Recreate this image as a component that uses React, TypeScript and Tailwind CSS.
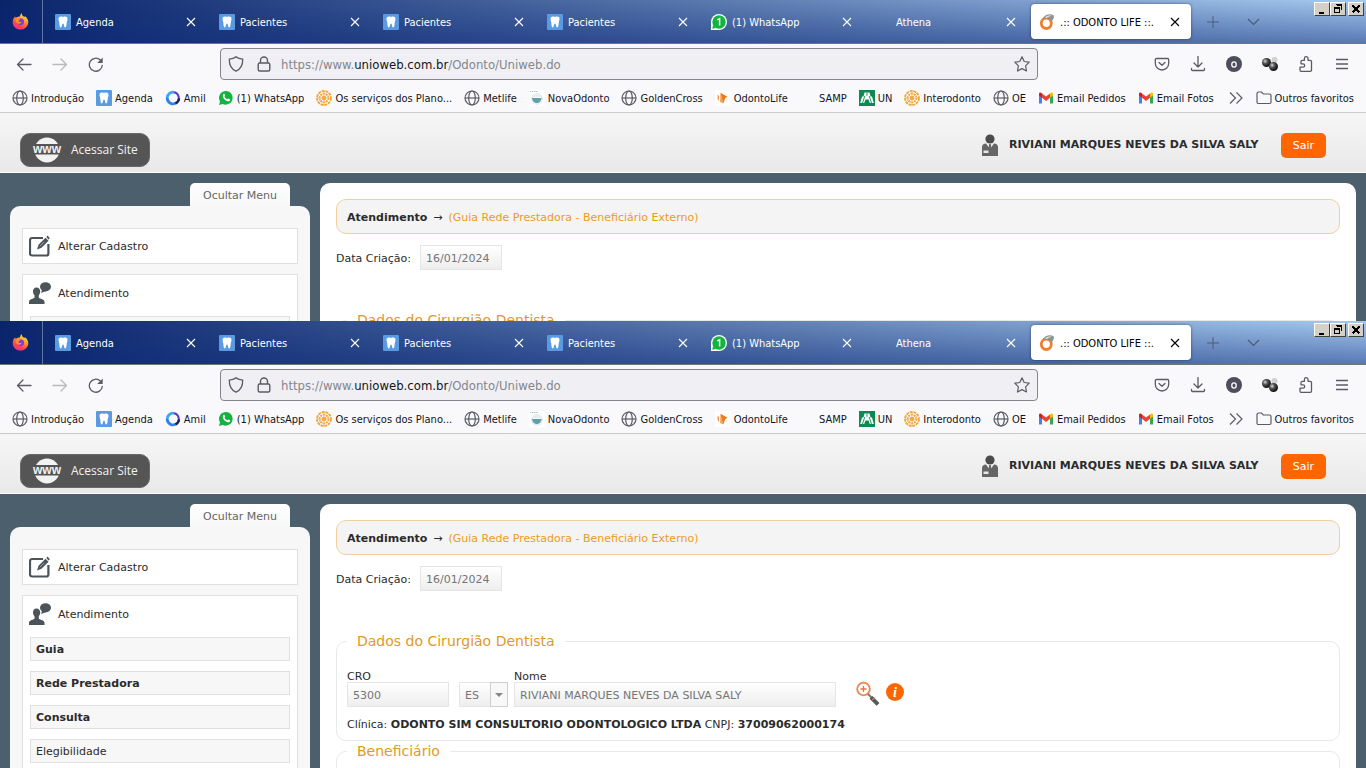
import React, { useId } from 'react';
import { clsx } from 'clsx';

type IconName =
  | 'tooth'
  | 'whatsapp'
  | 'whatsappCount'
  | 'globe'
  | 'amil'
  | 'flower'
  | 'nova'
  | 'odontoLife'
  | 'odontoRing'
  | 'uniodonto'
  | 'gmail'
  | 'folder'
  | 'blank';

interface LinkItem {
  label: string;
  icon: IconName;
}

const TABS: LinkItem[] = [
  { label: 'Agenda', icon: 'tooth' },
  { label: 'Pacientes', icon: 'tooth' },
  { label: 'Pacientes', icon: 'tooth' },
  { label: 'Pacientes', icon: 'tooth' },
  { label: '(1) WhatsApp', icon: 'whatsappCount' },
  { label: 'Athena', icon: 'blank' },
  { label: '.:: ODONTO LIFE ::.', icon: 'odontoRing' },
];

const BOOKMARKS: LinkItem[] = [
  { label: 'Introdução', icon: 'globe' },
  { label: 'Agenda', icon: 'tooth' },
  { label: 'Amil', icon: 'amil' },
  { label: '(1) WhatsApp', icon: 'whatsapp' },
  { label: 'Os serviços dos Plano...', icon: 'flower' },
  { label: 'Metlife', icon: 'globe' },
  { label: 'NovaOdonto', icon: 'nova' },
  { label: 'GoldenCross', icon: 'globe' },
  { label: 'OdontoLife', icon: 'odontoLife' },
  { label: 'SAMP', icon: 'blank' },
  { label: 'UN', icon: 'uniodonto' },
  { label: 'Interodonto', icon: 'flower' },
  { label: 'OE', icon: 'globe' },
  { label: 'Email Pedidos', icon: 'gmail' },
  { label: 'Email Fotos', icon: 'gmail' },
];

const SUBMENU = [
  { label: 'Guia', bold: true },
  { label: 'Rede Prestadora', bold: true },
  { label: 'Consulta', bold: true },
  { label: 'Elegibilidade', bold: false },
];

function SiteIcon({ name }: { name: IconName }) {
  const box = { width: 16, height: 16, viewBox: '0 0 16 16', className: 'shrink-0', 'aria-hidden': true };

  switch (name) {
    case 'tooth':
      return (
        <svg {...box}>
          <rect width="16" height="16" rx="1" fill="#5a9ae0" />
          <path
            d="M3.500 4.800C3.500 2.600 5.600 2.200 8 3c2.400-.8 4.500-.4 4.500 1.800 0 1.600-.6 2.400-.8 4-.2 2-.2 4.700-1.600 4.700-1.200 0-.9-3.900-2.100-3.900s-.9 3.900-2.100 3.900c-1.400 0-1.400-2.700-1.600-4.700-.2-1.600-.8-2.400-.8-4Z"
            fill="#fff"
          />
        </svg>
      );
    case 'whatsapp':
      return (
        <svg {...box}>
          <path d="M1 15 2 11.400A6.800 6.800 0 1 1 4.700 13.900Z" fill="#12b33f" />
          <path
            d="M5.400 4.100c.5-.4 1-.3 1.200.2l.5 1.200c.1.400-.7 1-.6 1.300.6 1.200 1.500 2 2.700 2.500.4.1.9-1 1.300-.8l1.500.8c.4.300 0 1.400-.8 1.800-1 .5-2.700 0-4.300-1.300C5.300 8.400 4 6 5.400 4.100Z"
            fill="#fff"
          />
        </svg>
      );
    case 'whatsappCount':
      return (
        <svg {...box}>
          <path d="M0 16V8a8 8 0 1 1 8 8Z" fill="#fff" />
          <circle cx="8" cy="8" r="6.700" fill="#12b33f" />
          <path d="M1.300 14.700 2 11l3 3.100Z" fill="#12b33f" />
          <path d="M6.200 5.900 8.600 4.700v6.800" fill="none" stroke="#fff" strokeWidth="1.500" />
        </svg>
      );
    case 'globe':
      return (
        <svg {...box} fill="none" stroke="#5b5b66" strokeWidth="1.200">
          <circle cx="8" cy="8" r="7" />
          <ellipse cx="8" cy="8" rx="3.300" ry="7" />
          <path d="M1 8h14" />
        </svg>
      );
    case 'amil':
      return (
        <svg {...box} fill="none" strokeWidth="2.800">
          <path d="M9 2.300A5.800 5.800 0 0 0 2.200 8" stroke="#3aa7f0" />
          <path d="M2.200 8a5.800 5.800 0 0 0 9.200 4.700" stroke="#2f7fe8" />
          <path d="M11.400 12.700A5.800 5.800 0 0 0 9 2.300" stroke="#5238c8" strokeWidth="2" />
          <path d="M14 8.500a6 6 0 0 1-3.500 5" stroke="#17255f" strokeWidth="2.400" />
        </svg>
      );
    case 'flower':
      return (
        <svg {...box} fill="none" stroke="#f3a73a">
          <circle cx="8" cy="8" r="7" strokeWidth="1.800" strokeDasharray="3 .8" />
          <circle cx="8" cy="8" r="4.400" strokeWidth="1.400" strokeDasharray="2 .7" />
          <circle cx="8" cy="8" r="1.600" />
          <path d="M8 1v14M1 8h14M3 3l10 10M13 3 3 13" strokeWidth=".8" />
        </svg>
      );
    case 'nova':
      return (
        <svg {...box}>
          <rect width="16" height="16" fill="#fff" />
          <path d="M1 1.500h8" stroke="#b9c4c8" strokeDasharray="1.500 .5" />
          <circle cx="8" cy="9" r="6" fill="#e9edef" />
          <path d="M3 7.500h9.500c0 3-2 5.500-4.700 5.500S3 10.500 3 7.500Z" fill="#5fa0ab" />
          <path d="M3.500 7h8.500v1H3.500Z" fill="#fff" />
        </svg>
      );
    case 'odontoLife':
      return (
        <svg {...box}>
          <path d="M0 0h16v16H0z" fill="#fff" />
          <path d="M2.500 4.500 4 6v5L2.500 9Z" fill="#f09a55" />
          <path d="M5.500 2.800 12.500 6.800 10.300 8 8.300 13.500 6.500 8.500Z" fill="#ee7a1e" />
          <path d="M5.500 2.800 5 12 8.300 13.500Z" fill="#f5a45c" />
        </svg>
      );
    case 'odontoRing':
      return (
        <svg {...box}>
          <ellipse cx="7.300" cy="9.300" rx="5" ry="5.200" fill="none" stroke="#ef7f2c" strokeWidth="2.800" />
          <path d="M3.500 4.500C6 .5 11-.8 14.600 1.200 15.600 3.500 14 6 12.400 7.400 10.500 4.500 7 3.500 3.500 4.500Z" fill="#8f9296" />
          <path d="M6 3.500c2-1.800 5-2.400 7-1.400-1.500 0-4 .4-5 2Z" fill="#e2e4e6" />
        </svg>
      );
    case 'uniodonto':
      return (
        <svg {...box}>
          <rect width="16" height="16" fill="#0b8a54" />
          <path d="M5.500 2.500h5L11.500 6.500h1.500l1.800 6.500h-4L9.500 9.500h-3L5.200 13h-4L3 6.500h1.500Z" fill="#fff" />
          <path d="M8 2.500v3.300M5.800 6l-2.300 7M10.200 6l2.300 7" stroke="#0b8a54" strokeWidth=".9" />
        </svg>
      );
    case 'gmail':
      return (
        <svg {...box}>
          <path d="M1 4v9.500h3V6.300Z" fill="#3f83f0" />
          <path d="M15 4v9.500h-3V6.300Z" fill="#32a853" />
          <path d="M12 3.500 13.200 2.600C14.200 2 15 2.700 15 4v1.500L12 7.800Z" fill="#fbbc04" />
          <path d="M4 3.500 8 6.600l4-3.100v4.300L8 10.900 4 7.800Z" fill="#ea4335" />
          <path d="M1 5.500V4c0-1.500 1-2 2-1.300l1 .8v4.300Z" fill="#c5221f" />
        </svg>
      );
    case 'folder':
      return (
        <svg {...box} fill="none" stroke="#5b5b66" strokeWidth="1.200">
          <path d="M1 3.500C1 2.600 1.600 2 2.500 2h3L7.300 4h6.200c.9 0 1.500.6 1.500 1.500V12c0 .9-.6 1.500-1.500 1.500h-11C1.600 13.500 1 12.900 1 12Z" />
        </svg>
      );
    default:
      return <span className="w-4 shrink-0" />;
  }
}

function FirefoxLogo() {
  const id = useId();
  return (
    <svg width="17" height="17" viewBox="0 0 17 17" aria-hidden>
      <defs>
        <linearGradient id={id} x1=".8" y1="0" x2=".3" y2="1">
          <stop offset="0" stopColor="#fff04a" />
          <stop offset=".4" stopColor="#ff9a2a" />
          <stop offset=".75" stopColor="#ff4050" />
          <stop offset="1" stopColor="#f0308a" />
        </linearGradient>
      </defs>
      <path
        d="M10 .3c-.6 1.700.5 2.500 2 3.500L13.500 3.600c2 1.800 3 4 2.700 6.300-.6 3.900-3.700 6.700-7.700 6.700C4.200 16.600.7 13.300.7 9.200c0-2.600 1-4.500 2.500-5.700l.4 1.500C4.700 3.600 8 4 8.200 3 8 1.900 8.700 1 10 .3Z"
        fill={`url(#${id})`}
      />
      <circle cx="8.800" cy="8.800" r="3.200" fill="#7a3bd8" />
      <path d="M4 6.500c1.600-.9 3.300-.6 4.700.3-1.200.1-2.200.5-2.200 1.200 0 1 1.800 1.200 3.300.7-.5 1.800-2.800 2.700-4.700 1.400C4 9.300 3.500 7.800 4 6.500Z" fill="#ff9030" />
    </svg>
  );
}

function CloseX() {
  return (
    <svg width="10" height="10" viewBox="0 0 10 10" fill="none" stroke="currentColor" strokeWidth="1.100" aria-hidden>
      <path d="M1 1l8 8M9 1 1 9" />
    </svg>
  );
}

function WindowButton({ label, className, children }: { label: string; className?: string; children: React.ReactNode }) {
  return (
    <button
      type="button"
      aria-label={label}
      className={clsx(
        'flex h-3.5 w-4 items-center justify-center border border-t-white border-r-[#404040] border-b-[#404040] border-l-white bg-[#d4d0c8]',
        className,
      )}
    >
      <svg width="12" height="12" viewBox="0 0 12 12" fill="none" stroke="#000" shapeRendering="crispEdges" aria-hidden>
        {children}
      </svg>
    </button>
  );
}

function TabStrip() {
  return (
    <div className="flex h-11 border-b border-[#74747c] bg-[linear-gradient(to_bottom,rgba(10,40,120,0),rgba(10,40,120,0.5)),linear-gradient(to_right,#0a246a,#a6caf0)] text-white">
      <div className="flex w-[43px] shrink-0 items-center justify-center border-r border-[#5f75a6] pr-0.5">
        <FirefoxLogo />
      </div>
      <div className="flex gap-1 py-1 pl-1" role="tablist">
        {TABS.map((tab, i) => {
          const active = i === TABS.length - 1;
          return (
            <div
              key={i}
              className={clsx('flex w-40 items-center rounded px-2', active && 'bg-white text-black shadow-[0_0_3px_rgba(0,0,0,0.5)]')}
            >
              <button type="button" role="tab" aria-selected={active} className="flex min-w-0 flex-1 items-center gap-[5px] text-left">
                <SiteIcon name={tab.icon} />
                <span className="pt-0.5 whitespace-nowrap">{tab.label}</span>
              </button>
              <button type="button" aria-label="Fechar aba" className="flex w-4 justify-center">
                <CloseX />
              </button>
            </div>
          );
        })}
      </div>
      <div className="flex items-center gap-7 pl-4 text-[#4f5a76]">
        <button type="button" aria-label="Nova aba">
          <svg width="12" height="12" viewBox="0 0 12 12" stroke="currentColor" fill="none" aria-hidden>
            <path d="M6 0v12M0 6h12" />
          </svg>
        </button>
        <button type="button" aria-label="Listar abas">
          <svg width="13" height="8" viewBox="0 0 13 8" stroke="currentColor" fill="none" strokeWidth="1.200" aria-hidden>
            <path d="m1 1 5.500 5.500L12 1" />
          </svg>
        </button>
      </div>
      <div className="mt-0.5 mr-0.5 ml-auto flex self-start">
        <WindowButton label="Minimizar">
          <path d="M3 9h5M3 10h5" />
        </WindowButton>
        <WindowButton label="Restaurar">
          <path d="M4.500 2.500h5v4M4 1.500h6M2.500 5.500h5v4h-5zM2 4.500h6" />
        </WindowButton>
        <WindowButton label="Fechar" className="ml-0.5">
          <path d="m2.500 2.500 7 7m0-7-7 7" strokeWidth="1.600" />
        </WindowButton>
      </div>
    </div>
  );
}

function ToolButton({ label, children, faded }: { label: string; children: React.ReactNode; faded?: boolean }) {
  return (
    <button type="button" aria-label={label} className={clsx('flex h-8 w-9 items-center justify-center text-[#5b5b66]', faded && 'opacity-40')}>
      <svg width="16" height="16" viewBox="0 0 16 16" fill="none" stroke="currentColor" strokeWidth="1.300" strokeLinecap="round" strokeLinejoin="round" aria-hidden>
        {children}
      </svg>
    </button>
  );
}

function NavBar() {
  const ball = useId();
  return (
    <div className="flex items-center px-1.5 pt-1">
      <ToolButton label="Voltar">
        <path d="M15 8.500H1.500M7 3 1.500 8.500 7 14" />
      </ToolButton>
      <ToolButton label="Avançar" faded>
        <path d="M1 8.500h13.500M9 3 14.500 8.500 9 14" />
      </ToolButton>
      <ToolButton label="Recarregar">
        <path d="M14.300 9.300A6.500 6.500 0 1 1 12.300 4" />
        <path d="M14.700 1.500V7H9.200Z" fill="currentColor" stroke="none" />
      </ToolButton>

      <div className="mx-[106px] flex h-8 flex-1 items-center rounded border border-[#84848c] bg-[#f0f0f4] px-[7px] text-[#5b5b66]">
        <svg width="16" height="16" viewBox="0 0 16 16" fill="none" stroke="currentColor" strokeWidth="1.300" aria-hidden>
          <path d="M8 .9C6.200 2.200 4 2.900 1.300 3.200 1.200 9 2.700 12.800 8 15.200c5.300-2.400 6.800-6.200 6.700-12C12 2.900 9.800 2.200 8 .9Z" />
        </svg>
        <svg className="ml-3" width="16" height="16" viewBox="0 0 16 16" fill="none" stroke="currentColor" strokeWidth="1.400" aria-hidden>
          <rect x="2.200" y="7" width="11.600" height="8" rx="1.500" />
          <path d="M4.500 7V4.500a3.500 3.500 0 0 1 7 0V7" />
        </svg>
        <a
          href="#endereco"
          className="ml-[9px] flex-1 pt-0.5 font-['DejaVu_Sans_Condensed','DejaVu_Sans',sans-serif] text-[13px] whitespace-nowrap text-[#85858d]"
        >
          https://www.<span className="text-[#15141a]">unioweb.com.br</span>/Odonto/Uniweb.do
        </a>
        <button type="button" aria-label="Favoritar">
          <svg width="16" height="16" viewBox="0 0 16 16" fill="none" stroke="currentColor" strokeWidth="1.200" strokeLinejoin="round" aria-hidden>
            <path d="m8 .8 2.200 4.700 5 .7-3.600 3.600.9 5.200L8 12.600 3.500 15l.9-5.200L.8 6.200l5-.7Z" />
          </svg>
        </button>
      </div>

      <ToolButton label="Pocket">
        <path d="M2.500 2.500h11c.7 0 1.200.5 1.200 1.200v3.600a6.700 6.700 0 0 1-13.400 0V3.700c0-.7.500-1.200 1.200-1.200Z" />
        <path d="M5 6.500 8 9.300l3-2.800" />
      </ToolButton>
      <ToolButton label="Downloads">
        <path d="M8 .5v10M4 7l4 4 4-4M1.500 12.500v1c0 .6.400 1 1 1h11c.6 0 1-.4 1-1v-1" />
      </ToolButton>
      <ToolButton label="Conta">
        <circle cx="8" cy="8" r="8" fill="#4e4d5b" stroke="none" />
        <ellipse cx="8" cy="8.500" rx="2.200" ry="2.600" stroke="#fff" strokeWidth="1.300" />
      </ToolButton>
      <ToolButton label="Extensão">
        <defs>
          <radialGradient id={ball} cx=".35" cy=".35" r=".6">
            <stop offset="0" stopColor="#d8d8d8" />
            <stop offset=".45" stopColor="#555" />
            <stop offset="1" stopColor="#151515" />
          </radialGradient>
        </defs>
        <circle cx="12.500" cy="4" r="3" fill="#d0d0d0" stroke="none" />
        <circle cx="4.500" cy="6.500" r="4.500" fill={`url(#${ball})`} stroke="none" />
        <circle cx="11.500" cy="10.500" r="4.500" fill={`url(#${ball})`} stroke="none" />
      </ToolButton>
      <ToolButton label="Extensões">
        <path d="M3 15.300h9.300c.7 0 1.200-.5 1.200-1.200V5.500c0-.7-.5-1.200-1.200-1.200H10V2.500a1.800 1.800 0 0 0-3.600 0v1.800H4.200C3.500 4.300 3 4.800 3 5.500v2.300h2a1.700 1.700 0 0 1 0 3.400H2v3.100c0 .6.400 1 1 1Z" />
      </ToolButton>
      <ToolButton label="Menu">
        <path d="M2 3.500h12M2 8h12M2 12.500h12" strokeLinecap="butt" />
      </ToolButton>
    </div>
  );
}

function BookmarksBar() {
  return (
    <nav className="flex h-[33px] items-center border-b border-[#cbcbce] pt-1 pr-3 pl-3 text-[#15141a]">
      <div className="flex items-center gap-3">
        {BOOKMARKS.map((b, i) => (
          <a key={i} href="#favorito" className="flex items-center gap-[3px] whitespace-nowrap">
            <SiteIcon name={b.icon} />
            <span className="pt-0.5">{b.label}</span>
          </a>
        ))}
      </div>
      <button type="button" aria-label="Mais favoritos" className="mr-3 ml-auto text-[#5b5b66]">
        <svg width="16" height="16" viewBox="0 0 16 16" fill="none" stroke="currentColor" strokeWidth="1.200" aria-hidden>
          <path d="m2 2.500 5.500 5.500L2 13.500M8.500 2.500 14 8l-5.500 5.500" />
        </svg>
      </button>
      <a href="#outros" className="flex items-center gap-[3px] whitespace-nowrap">
        <SiteIcon name="folder" />
        <span className="pt-0.5">Outros favoritos</span>
      </a>
    </nav>
  );
}

function SiteHeader() {
  return (
    <header className="flex h-[60px] items-start border-b border-white bg-linear-to-b from-[#f6f6f6] to-[#e9e9e9] pt-5 pr-10 pl-5">
      <a
        href="#site"
        className="flex h-[34px] items-center gap-2 rounded-[10px] border border-[#6a6a6a] bg-[#555] px-[11px] font-['Open_Sans',sans-serif] text-xs text-[#f2f2f2]"
      >
        <svg width="31" height="26" viewBox="0 0 31 26" aria-hidden>
          <circle cx="15" cy="13" r="12.500" fill="#f2f2f2" />
          <rect x="0" y="7" width="31" height="10.500" fill="#555" />
          <text x="15" y="15.500" textAnchor="middle" fontFamily="Liberation Sans, sans-serif" fontSize="12" fontWeight="700" fill="#f2f2f2">
            www
          </text>
        </svg>
        Acessar Site
      </a>
      <div className="ml-auto flex items-start">
        <svg width="18" height="24" viewBox="0 0 18 24" aria-hidden>
          <circle cx="9" cy="6" r="4.600" fill="#4b4b4b" />
          <path d="M1 23V14c0-2 1.500-3.300 4-3.500L9 16l4-5.500c2.500.2 4 1.500 4 3.500v9Z" fill="#666" />
          <path d="M8.200 11h1.600l.7 5L9 17.500 7.500 16Z" fill="#666" />
          <path d="M2.500 17.500h5v2.500h-5z" fill="#e8e8e8" />
        </svg>
        <strong className="ml-2.5 min-w-[262px] leading-6">RIVIANI MARQUES NEVES DA SILVA SALY</strong>
        <button type="button" className="ml-2.5 h-[25px] w-[45px] rounded-[5px] bg-[#ff6600] text-white">
          Sair
        </button>
      </div>
    </header>
  );
}

function SideMenu() {
  return (
    <aside className="flex w-[300px] shrink-0 flex-col">
      <button type="button" className="mr-5 h-[23px] w-[100px] self-end rounded-t-[5px] bg-linear-to-b from-white to-[#f7f7f7] pt-0.5 text-[#666]">
        Ocultar Menu
      </button>
      <nav className="flex flex-1 flex-col gap-2.5 rounded-t-[10px] bg-[#f7f7f7] px-3 pt-[22px]">
        <a href="#cadastro" className="flex h-9 shrink-0 items-center gap-[7px] border border-[#e0e0e0] bg-white px-1.5">
          <svg width="22" height="22" viewBox="0 0 22 22" fill="none" aria-hidden>
            <path d="M14 3H3.200C2.100 3 1 4 1 5.200v13.300c0 1.200 1 2 2.200 2h14c1.200 0 2.200-.8 2.200-2V9" stroke="#4b5459" strokeWidth="2.200" />
            <path d="M8 14.500 9.500 9.700 16.500 2.700l3 3-7 7Z" fill="#4b5459" />
            <path d="m17.300 1.900 1.300-1.300 2.200 2.600-1.200 1.200Z" fill="#4b5459" />
            <path d="m10.800 11.300 4.500-4.500" stroke="#b8bec1" strokeWidth=".8" />
          </svg>
          <span className="pt-0.5">Alterar Cadastro</span>
        </a>
        <div className="flex-1 border border-b-0 border-[#e0e0e0] bg-white">
          <a href="#atendimento" className="flex h-9 items-center gap-[7px] px-1.5">
            <svg width="22" height="22" viewBox="0 0 22 22" fill="#4b5459" aria-hidden>
              <ellipse cx="16.500" cy="4.800" rx="5.500" ry="4.600" />
              <path d="m13 7.500-.8 3.500L17 9Z" />
              <path d="M7.500 5.500c2.300 0 3.800 1.700 3.700 4-.1 1.700-.7 2.800-1.400 3.700v2.500c.5.900 5.500 1.200 5.700 4V22H0v-2.300c.2-2.800 5-3.100 5.500-4v-2.500c-.8-.9-1.400-2-1.500-3.700-.1-2.300 1.200-4 3.500-4Z" />
            </svg>
            <span className="pt-0.5">Atendimento</span>
          </a>
          <ul className="flex flex-col gap-2.5 px-[7px] pt-[5px]">
            {SUBMENU.map((item) => (
              <li key={item.label}>
                <a
                  href="#menu"
                  className={clsx('flex h-6 items-center border border-[#e0e0e0] bg-[#f7f7f7] px-[5px] pt-0.5', item.bold && 'font-bold')}
                >
                  {item.label}
                </a>
              </li>
            ))}
          </ul>
        </div>
      </nav>
    </aside>
  );
}

const FIELD = 'h-[25px] border border-[#e5e5e5] bg-linear-to-b from-white to-[#eeeeee] px-[5px] pt-0.5 text-[#757575] outline-none';

function Section({ title, children }: { title: string; children?: React.ReactNode }) {
  return (
    <fieldset className="rounded-[10px] border border-[#e8e8e8] px-2.5">
      <legend className="px-2.5 text-sm leading-5 text-[#e09a25]">{title}</legend>
      {children}
    </fieldset>
  );
}

function AttendanceForm() {
  const id = useId();
  return (
    <main className="min-w-0 flex-1 rounded-t-[10px] bg-white px-4 pt-4">
      <div className="flex h-[35px] items-center gap-1.5 rounded-[10px] border border-[#f0cf9c] bg-[#f4f4f4] px-2.5 pt-0.5">
        <strong>Atendimento</strong>
        <span>→</span>
        <span className="text-[#eb9c1c]">(Guia Rede Prestadora - Beneficiário Externo)</span>
      </div>

      <div className="mt-[11px] mb-10 flex items-center gap-[5px]">
        <label htmlFor={`${id}-data`} className="min-w-[79px] pt-0.5">Data Criação:</label>
        <input id={`${id}-data`} className={clsx(FIELD, 'w-[82px]')} defaultValue="16/01/2024" />
      </div>

      <Section title="Dados do Cirurgião Dentista">
        <div className="flex items-end pt-5">
          <div className="flex flex-col">
            <label htmlFor={`${id}-cro`} className="leading-[11px]">CRO</label>
            <input id={`${id}-cro`} className={clsx(FIELD, 'w-[102px]')} defaultValue="5300" />
          </div>
          <div className="relative ml-2.5">
            <select aria-label="UF" className={clsx(FIELD, 'block w-[49px] appearance-none')} defaultValue="ES">
              <option>ES</option>
            </select>
            <span className="pointer-events-none absolute inset-y-0 right-0 flex w-[18px] items-center justify-center border border-[#cfcfcf] bg-[#f8f8f8]">
              <svg width="8" height="4" viewBox="0 0 8 4" fill="#858585" aria-hidden>
                <path d="M0 0h8L4 4Z" />
              </svg>
            </span>
          </div>
          <div className="ml-1.5 flex flex-col">
            <label htmlFor={`${id}-nome`} className="leading-[11px]">Nome</label>
            <input id={`${id}-nome`} className={clsx(FIELD, 'w-[322px]')} defaultValue="RIVIANI MARQUES NEVES DA SILVA SALY" />
          </div>
          <button type="button" aria-label="Pesquisar" className="ml-5">
            <svg width="24" height="26" viewBox="0 0 24 26" fill="none" aria-hidden>
              <circle cx="7.500" cy="8" r="6.300" stroke="#ee8450" strokeWidth="1.800" />
              <path d="M4.500 8h6M7.500 5v6" stroke="#e8703c" strokeWidth="1.300" />
              <path d="m12 13 4 4" stroke="#8b7355" strokeWidth="2" />
              <path d="m15 16.300 7 7" stroke="#55585c" strokeWidth="4" />
              <path d="m16 19.300 3-3" stroke="#e9a06e" />
            </svg>
          </button>
          <button type="button" aria-label="Informações" className="mb-1.5 ml-1.5">
            <svg width="18" height="18" viewBox="0 0 18 18" aria-hidden>
              <circle cx="9" cy="9" r="9" fill="#ff6600" />
              <text x="9" y="13.500" textAnchor="middle" fontFamily="Liberation Serif, serif" fontSize="14" fontStyle="italic" fontWeight="700" fill="#fff">
                i
              </text>
            </svg>
          </button>
        </div>
        <p className="mt-[9px] mb-[7px] leading-[17px] whitespace-nowrap">
          Clínica: <strong>ODONTO SIM CONSULTORIO ODONTOLOGICO LTDA</strong> CNPJ: <strong>37009062000174</strong>
        </p>
      </Section>
      <Section title="Beneficiário">
        <div className="h-20" />
      </Section>
    </main>
  );
}

function BrowserWindow() {
  return (
    <div className="flex min-h-full flex-col font-['DejaVu_Sans',sans-serif] text-[11px] leading-4 text-[#2b2b2b]">
      <div className="bg-[#f9f9fb] font-['DejaVu_Sans_Condensed','DejaVu_Sans',sans-serif]">
        <TabStrip />
        <NavBar />
        <BookmarksBar />
      </div>
      <SiteHeader />
      <div className="flex flex-1 gap-2.5 bg-[#4c5f6d] px-2.5 pt-2.5">
        <SideMenu />
        <AttendanceForm />
      </div>
    </div>
  );
}

export default function App() {
  return (
    <div className="flex h-screen flex-col overflow-hidden">
      <section className="h-[321px] shrink-0 overflow-hidden">
        <BrowserWindow />
      </section>
      <section className="min-h-0 flex-1 overflow-hidden">
        <BrowserWindow />
      </section>
    </div>
  );
}
